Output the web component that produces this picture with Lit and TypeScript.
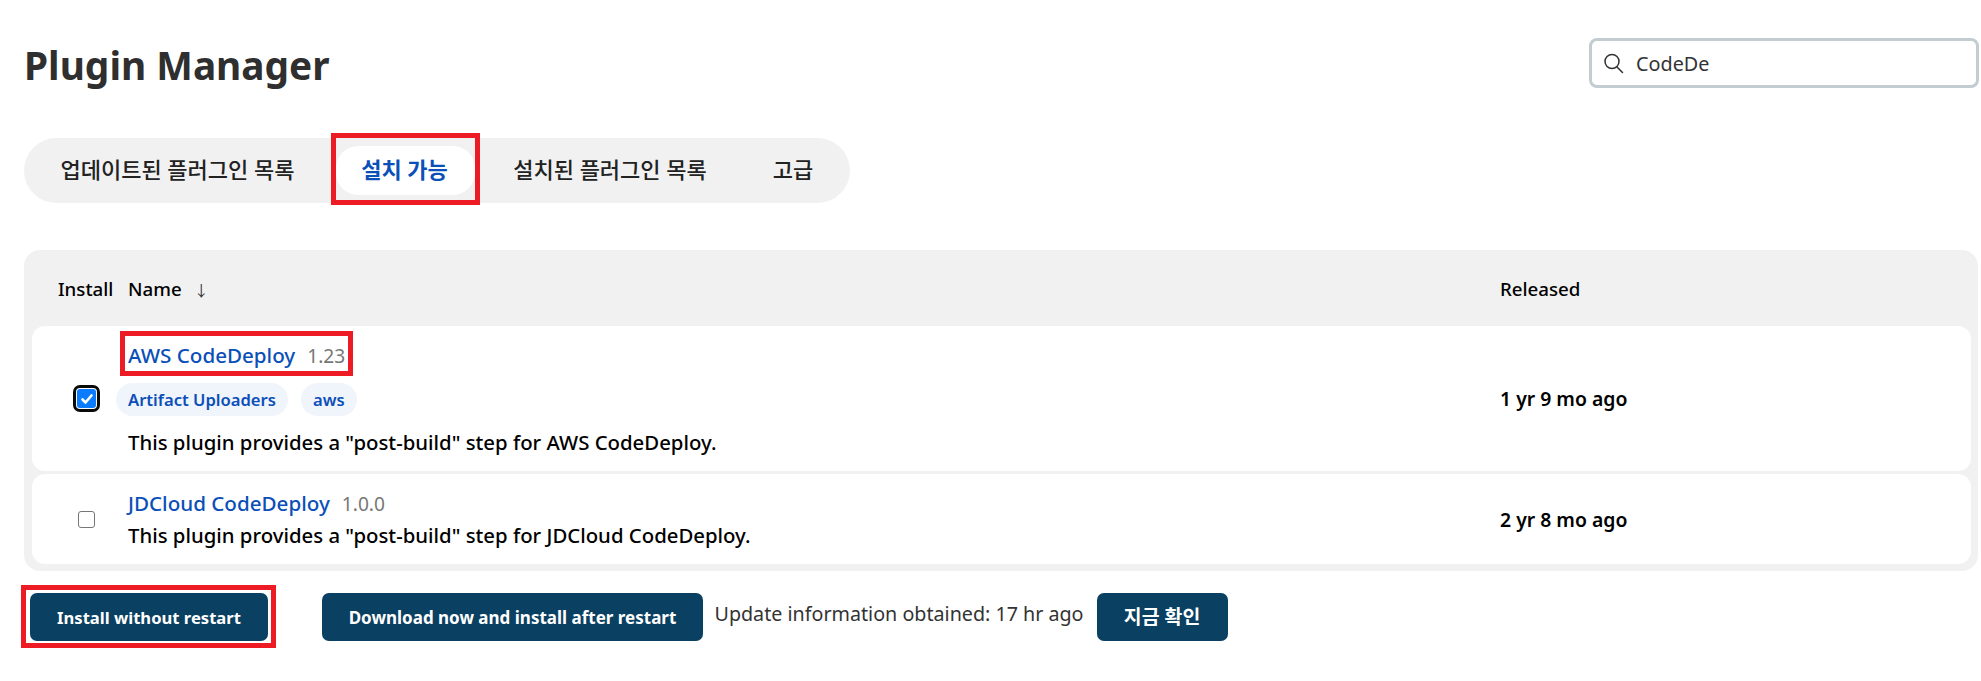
import { LitElement, html, css, svg } from "lit";
import { customElement } from "lit/decorators.js";

@customElement("app-root")
export class AppRoot extends LitElement {
  static styles = css`
    :host { display: block; font-family: "Noto Sans", "Noto Sans CJK KR", sans-serif; color: #000; background: #fff; min-height: 681px; }
    * { box-sizing: border-box; }
    .page { padding: 38px 2px 0 24px; }
    .head { display: flex; justify-content: space-between; align-items: center; height: 50px; }
    h1 { margin: 0; font-size: 38.8px; line-height: 50px; font-weight: 700; color: #2f2f2f; position: relative; top: 2px; }
    .search { width: 390px; height: 50px; border: 3px solid #c3ccd1; border-radius: 8px; display: flex; align-items: center; gap: 12px; padding: 0 0 0 10px; color: #333; font-size: 19.8px; }
    .search svg { width: 22px; height: 22px; flex: none; }
    .tabs { margin-top: 50px; width: 826px; height: 65px; background: #f1f1f1; border-radius: 33px; display: flex; align-items: center; padding-left: 8px; }
    .tab { height: 49px; padding-bottom: 6px; display: flex; align-items: center; justify-content: center; font-size: 22px; font-weight: 500; color: #222; border-radius: 22px; position: relative; white-space: nowrap; }
    .t1 { width: 291px; margin-right: 13px; }
    .t2 { width: 139px; padding-right: 2px; background: #fff; color: #0b4fb8; font-weight: 700; }
    .t3 { width: 270px; }
    .t4 { width: 96px; }
    .mark::after { content: ""; position: absolute; border: 5px solid #ed1c24; pointer-events: none; }
    .t2.mark::after { inset: -13px -5px -10px -5px; }
    .table { margin-top: 47px; width: 1954px; background: #f1f1f1; border-radius: 16px; padding: 0 7px 7px 8px; }
    .cols { display: grid; grid-template-columns: 96px 1372px 1fr; align-items: center; }
    .thead { height: 76px; font-size: 18.7px; font-weight: 500; }
    .thead .first { padding-left: 26px; white-space: nowrap; }
    .sort { margin-left: 12px; font-size: 15px; font-weight: 400; color: #333; }
    .row { background: #fff; border-radius: 13px; padding: 14px 0 12px; }
    .row + .row { margin-top: 3px; }
    .check { justify-self: start; margin: 0 0 2px 46px; width: 17px; height: 17px; border: 1.5px solid #767676; border-radius: 3px; background: #fff; display: block; }
    .check.on { margin-left: 45px; width: 19px; height: 19px; background: #0b7cff; border: none; border-radius: 3px; outline: 3px solid #0a0a0a; outline-offset: 1px; display: flex; align-items: center; justify-content: center; }
    .check svg { width: 14px; height: 14px; }
    .title { display: flex; width: fit-content; height: 32px; align-items: baseline; gap: 12px; line-height: 32px; position: relative; top: -1px; font-size: 20.6px; white-space: nowrap; }
    .title a { color: #0b4fb8; font-weight: 500; text-decoration: none; }
    .title span { color: #777; font-size: 19.2px; }
    .title.mark::after { inset: -8px -8px -5px -8px; }
    .pills { display: flex; gap: 13px; margin: 11px 0 11px -12px; }
    .pill { height: 33px; line-height: 33px; padding: 0 12px; border-radius: 17px; background: #f0f4fb; color: #0b4fb8; font-size: 16.6px; font-weight: 600; }
    .desc { line-height: 32px; height: 32px; font-size: 20.35px; font-weight: 500; white-space: nowrap; position: relative; top: -1px; }
    .date { font-size: 19.4px; font-weight: 600; padding-bottom: 2px; }
    .actions { margin-top: 22px; padding-left: 6px; display: flex; align-items: center; }
    .btn { height: 48px; padding: 0; border: none; border-radius: 7px; background: #0a4062; color: #fff; font: 700 16.6px "Noto Sans", "Noto Sans CJK KR", sans-serif; position: relative; white-space: nowrap; }
    .b1 { width: 238px; }
    .btn.mark::after { inset: -8px -8px -7px -9px; }
    .b2 { width: 381px; margin-left: 54px; font-size: 17px; }
    .b3 { width: 131px; margin-left: 13px; font-size: 19.4px; }
    .b3 span { position: relative; top: -2px; }
    .info { margin-left: 11.5px; font-size: 19.7px; color: #333; white-space: nowrap; position: relative; top: -4px; }
  `;

  private searchIcon() {
    return html`<svg viewBox="0 0 22 22" fill="none" stroke="#333" stroke-width="1.5" stroke-linecap="round">
      ${svg`<circle cx="10" cy="9.5" r="7"/><path d="M15 15l5.5 5.5"/>`}
    </svg>`;
  }

  render() {
    return html`<div class="page">
      <div class="head">
        <h1>Plugin Manager</h1>
        <div class="search">${this.searchIcon()}<span>CodeDe</span></div>
      </div>
      <nav class="tabs">
        <div class="tab t1">업데이트된 플러그인 목록</div>
        <div class="tab t2 mark">설치 가능</div>
        <div class="tab t3">설치된 플러그인 목록</div>
        <div class="tab t4">고급</div>
      </nav>
      <div class="table">
        <div class="cols thead">
          <div class="first">Install</div>
          <div>Name<span class="sort">↓</span></div>
          <div>Released</div>
        </div>
        <div class="cols row">
          <span class="check on"><svg viewBox="0 0 14 14" fill="none" stroke="#fff" stroke-width="2.6" stroke-linecap="round" stroke-linejoin="round"><path d="M2.5 7.5l3 3 6-7"/></svg></span>
          <div>
            <div class="title mark"><a>AWS CodeDeploy</a><span>1.23</span></div>
            <div class="pills"><span class="pill">Artifact Uploaders</span><span class="pill">aws</span></div>
            <div class="desc">This plugin provides a "post-build" step for AWS CodeDeploy.</div>
          </div>
          <div class="date">1 yr 9 mo ago</div>
        </div>
        <div class="cols row">
          <span class="check"></span>
          <div>
            <div class="title"><a>JDCloud CodeDeploy</a><span>1.0.0</span></div>
            <div class="desc">This plugin provides a "post-build" step for JDCloud CodeDeploy.</div>
          </div>
          <div class="date">2 yr 8 mo ago</div>
        </div>
      </div>
      <div class="actions">
        <button class="btn b1 mark">Install without restart</button>
        <button class="btn b2">Download now and install after restart</button>
        <span class="info">Update information obtained: 17 hr ago</span>
        <button class="btn b3"><span>지금 확인</span></button>
      </div>
    </div>`;
  }
}
